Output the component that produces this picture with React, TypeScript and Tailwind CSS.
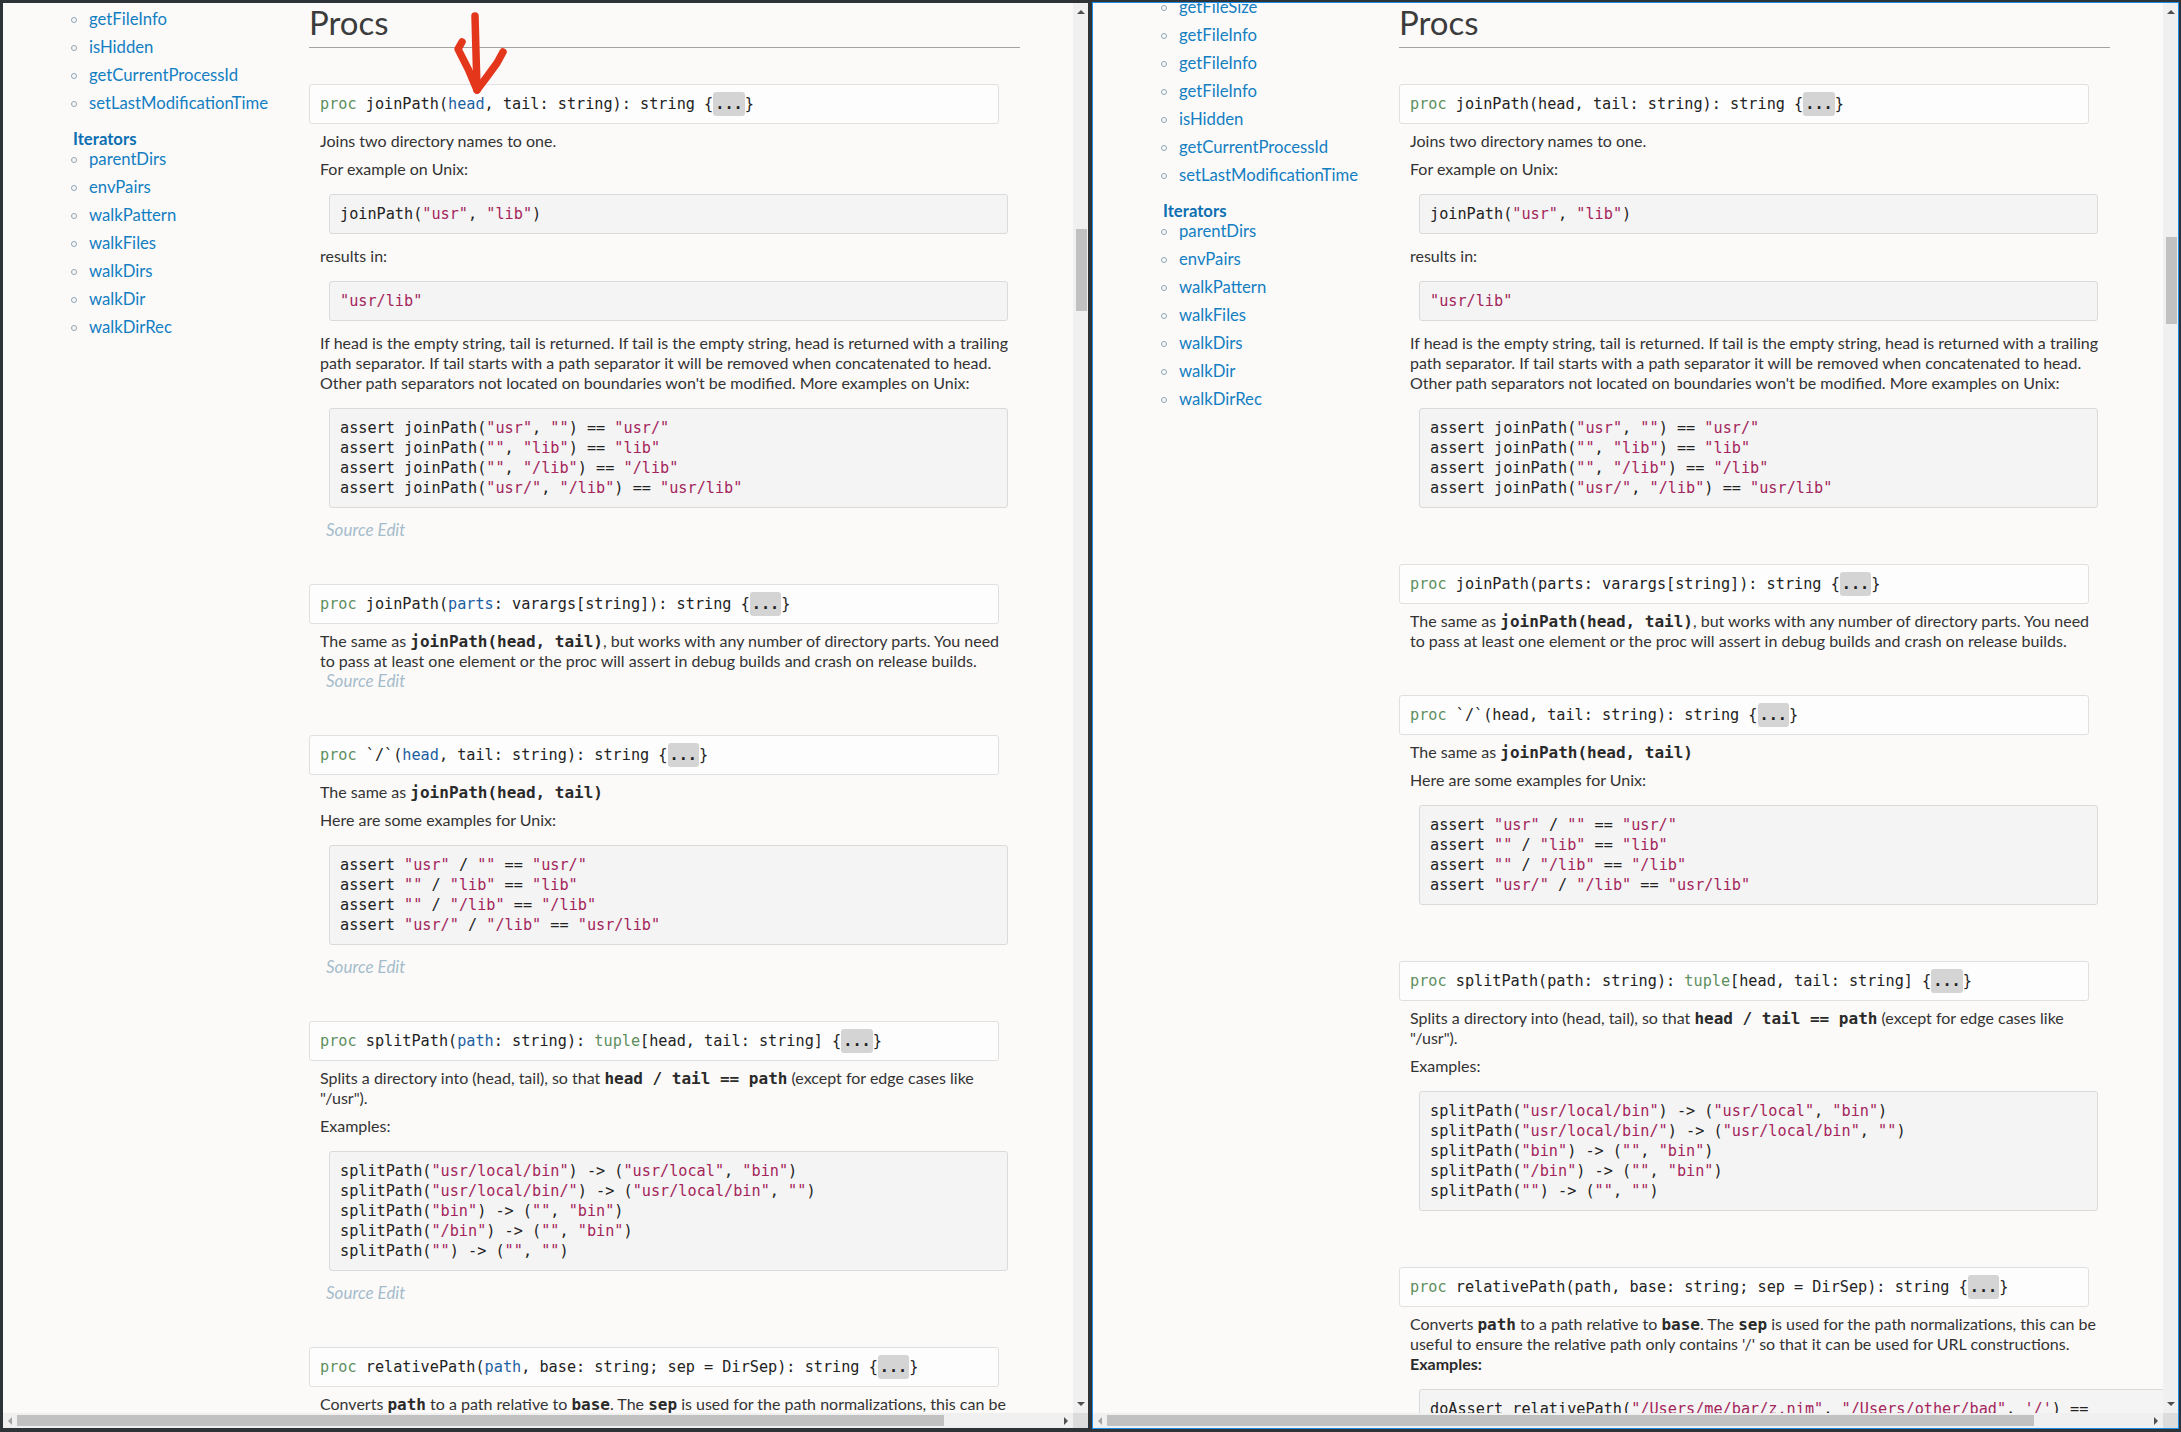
import React from 'react';

type Kids = { children?: React.ReactNode };

const MONO = "font-['DejaVu_Sans_Mono',monospace]";

// syntax colouring used by nimdoc
const Str = ({ children }: Kids) => <span className="text-[#a4255b]">{children}</span>;
const Kw = ({ children }: Kids) => <span className="text-[#5e8f60]">{children}</span>;
const Arg = ({ hl, children }: Kids & { hl: boolean }) => (
  <span className={hl ? 'text-[#1b5fa3]' : undefined}>{children}</span>
);
// inline code in prose; leading-none so it doesn't grow the line box
const B = ({ children }: Kids) => (
  <code className={`${MONO} font-bold text-[16px] leading-none text-[#2a2a2a]`}>{children}</code>
);

const Signature = ({ children }: Kids) => (
  <div
    className={`w-[690px] rounded-[3px] border border-[#e0e0e0] bg-[#fdfdfd] px-[10px] py-[9px] ${MONO} text-[15.2px] leading-[20px] text-[#222] whitespace-pre`}
  >
    <Kw>proc</Kw> {children} {'{'}
    <span className="rounded-[3px] bg-[#d4d4d4] px-[2px] py-[3px] font-bold">...</span>
    {'}'}
  </div>
);

const Code = ({ children, wide }: Kids & { wide?: boolean }) => (
  <pre
    className={`ml-[9px] ${wide ? 'w-[1100px]' : 'w-[679px]'} mt-[7px] mb-[12px] rounded-[3px] border border-[#dadada] bg-[#f4f4f4] px-[10px] py-[9px] ${MONO} text-[15.2px] leading-[20px] text-[#222] whitespace-pre`}
  >
    {children}
  </pre>
);

const P = ({ children }: Kids) => <p className="mb-[8px] last:mb-0">{children}</p>;

const SourceEdit = () => (
  <div className="ml-[17px] h-[20px] leading-[20px] italic text-[17px] text-[#a5bccb]">Source Edit</div>
);

const Entry = ({
  sig,
  first,
  source,
  children
}: Kids & { sig: React.ReactNode; first?: boolean; source: boolean }) => (
  <div className={`flex flex-col ${first ? 'mt-[36px]' : 'mt-[44px]'}`}>
    <Signature>{sig}</Signature>
    <div className="ml-[11px] mt-[7px] w-[698px] flex flex-col">{children}</div>
    {source && <SourceEdit />}
  </div>
);

const Procs = ({ hl, source }: { hl: boolean; source: boolean }) => (
  <div className="w-[711px] flex flex-col text-[16px] leading-[20px] text-[#333]">
    <h1 className="text-[33px] leading-[38px] pb-[6px] border-b border-[#a3a3a3] text-[#3c3c3c]">Procs</h1>

    {/* joinPath(head, tail) */}
    <Entry
      first
      source={source}
      sig={
        <>
          joinPath(<Arg hl={hl}>head</Arg>, tail: string): string
        </>
      }
    >
      <P>Joins two directory names to one.</P>
      <P>For example on Unix:</P>
      <Code>
        <div>
          joinPath(<Str>"usr"</Str>, <Str>"lib"</Str>)
        </div>
      </Code>
      <P>results in:</P>
      <Code>
        <div>
          <Str>"usr/lib"</Str>
        </div>
      </Code>
      <P>
        If head is the empty string, tail is returned. If tail is the empty string, head is returned with a trailing
        <br />
        path separator. If tail starts with a path separator it will be removed when concatenated to head.
        <br />
        Other path separators not located on boundaries won't be modified. More examples on Unix:
      </P>
      <Code>
        <div>
          assert joinPath(<Str>"usr"</Str>, <Str>""</Str>) == <Str>"usr/"</Str>
        </div>
        <div>
          assert joinPath(<Str>""</Str>, <Str>"lib"</Str>) == <Str>"lib"</Str>
        </div>
        <div>
          assert joinPath(<Str>""</Str>, <Str>"/lib"</Str>) == <Str>"/lib"</Str>
        </div>
        <div>
          assert joinPath(<Str>"usr/"</Str>, <Str>"/lib"</Str>) == <Str>"usr/lib"</Str>
        </div>
      </Code>
    </Entry>

    {/* joinPath(parts) */}
    <Entry
      source={source}
      sig={
        <>
          joinPath(<Arg hl={hl}>parts</Arg>: varargs[string]): string
        </>
      }
    >
      <P>
        The same as <B>joinPath(head, tail)</B>, but works with any number of directory parts. You need
        <br />
        to pass at least one element or the proc will assert in debug builds and crash on release builds.
      </P>
    </Entry>

    {/* `/` */}
    <Entry
      source={source}
      sig={
        <>
          `/`(<Arg hl={hl}>head</Arg>, tail: string): string
        </>
      }
    >
      <P>
        The same as <B>joinPath(head, tail)</B>
      </P>
      <P>Here are some examples for Unix:</P>
      <Code>
        <div>
          assert <Str>"usr"</Str> / <Str>""</Str> == <Str>"usr/"</Str>
        </div>
        <div>
          assert <Str>""</Str> / <Str>"lib"</Str> == <Str>"lib"</Str>
        </div>
        <div>
          assert <Str>""</Str> / <Str>"/lib"</Str> == <Str>"/lib"</Str>
        </div>
        <div>
          assert <Str>"usr/"</Str> / <Str>"/lib"</Str> == <Str>"usr/lib"</Str>
        </div>
      </Code>
    </Entry>

    {/* splitPath */}
    <Entry
      source={source}
      sig={
        <>
          splitPath(<Arg hl={hl}>path</Arg>: string): <Kw>tuple</Kw>[head, tail: string]
        </>
      }
    >
      <P>
        Splits a directory into (head, tail), so that <B>head / tail == path</B> (except for edge cases like
        <br />
        "/usr").
      </P>
      <P>Examples:</P>
      <Code>
        <div>
          splitPath(<Str>"usr/local/bin"</Str>) -&gt; (<Str>"usr/local"</Str>, <Str>"bin"</Str>)
        </div>
        <div>
          splitPath(<Str>"usr/local/bin/"</Str>) -&gt; (<Str>"usr/local/bin"</Str>, <Str>""</Str>)
        </div>
        <div>
          splitPath(<Str>"bin"</Str>) -&gt; (<Str>""</Str>, <Str>"bin"</Str>)
        </div>
        <div>
          splitPath(<Str>"/bin"</Str>) -&gt; (<Str>""</Str>, <Str>"bin"</Str>)
        </div>
        <div>
          splitPath(<Str>""</Str>) -&gt; (<Str>""</Str>, <Str>""</Str>)
        </div>
      </Code>
    </Entry>

    {/* relativePath */}
    <Entry
      source={source}
      sig={
        <>
          relativePath(<Arg hl={hl}>path</Arg>, base: string; sep = DirSep): string
        </>
      }
    >
      <P>
        Converts <B>path</B> to a path relative to <B>base</B>. The <B>sep</B> is used for the path normalizations,
        this can be
        <br />
        useful to ensure the relative path only contains '/' so that it can be used for URL constructions.
        <br />
        <strong className="font-bold text-[#2a2a2a]">Examples:</strong>
      </P>
      <Code wide>
        <div>
          doAssert relativePath(<Str>"/Users/me/bar/z.nim"</Str>, <Str>"/Users/other/bad"</Str>, <Str>'/'</Str>) ==
        </div>
      </Code>
    </Entry>
  </div>
);

type SideEntry = string | { header: string };

const Sidebar = ({ items, offset }: { items: SideEntry[]; offset: string }) => (
  <ul className={`w-[306px] shrink-0 ${offset} text-[16.7px]`}>
    {items.map((it, i) =>
      typeof it === 'string' ? (
        <li key={i} className="h-[28px] flex items-center">
          <span className="ml-[68px] w-[6px] h-[6px] rounded-full border border-[#8ea5b5]" />
          <span className="ml-[12px] text-[#137ec2]">{it}</span>
        </li>
      ) : (
        <li key={i} className="mt-[14px] h-[14px] leading-[14px] pl-[70px] font-bold text-[#0b6fb1]">
          {it.header}
        </li>
      )
    )}
  </ul>
);

const iterators = ['parentDirs', 'envPairs', 'walkPattern', 'walkFiles', 'walkDirs', 'walkDir', 'walkDirRec'];

const leftSide: SideEntry[] = [
  'getFileInfo',
  'isHidden',
  'getCurrentProcessId',
  'setLastModificationTime',
  { header: 'Iterators' },
  ...iterators
];

const rightSide: SideEntry[] = [
  'getFileSize',
  'getFileInfo',
  'getFileInfo',
  'getFileInfo',
  'isHidden',
  'getCurrentProcessId',
  'setLastModificationTime',
  { header: 'Iterators' },
  ...iterators
];

// browser scrollbars
const VScroll = ({ thumb }: { thumb: string }) => (
  <div className="w-[15px] h-[1410px] bg-[#f0f0f0] flex flex-col items-center">
    <div className="mt-[7px] w-0 h-0 border-x-[4px] border-x-transparent border-b-[4px] border-b-[#505050]" />
    <div className={`self-start ml-[3px] w-[11px] bg-[#c1c1c1] ${thumb}`} />
    <div className="flex-1" />
    <div className="mb-[7px] w-0 h-0 border-x-[4px] border-x-transparent border-t-[4px] border-t-[#505050]" />
  </div>
);

const HScroll = () => (
  <div className="flex h-[15px]">
    <div className="w-[1070px] bg-[#f0f0f0] flex items-center">
      <div className="ml-[5px] w-0 h-0 border-y-[4px] border-y-transparent border-r-[4px] border-r-[#a3a3a3]" />
      <div className="ml-[5px] w-[927px] h-[11px] bg-[#c1c1c1]" />
      <div className="flex-1" />
      <div className="mr-[5px] w-0 h-0 border-y-[4px] border-y-transparent border-l-[4px] border-l-[#505050]" />
    </div>
    <div className="w-[15px] bg-[#dcdcdc]" />
  </div>
);

// hand-drawn annotation over the first signature
const RedArrow = () => (
  <svg className="absolute left-0 top-0 pointer-events-none" width="600" height="120">
    <g fill="none" stroke="#e4361b" strokeWidth="7.5" strokeLinecap="round" strokeLinejoin="round">
      <path d="M472 13 L474 86" />
      <path d="M459 39 L455 46 Q466 66 474 87" />
      <path d="M500 49 L494 60 Q484 74 474 87" />
    </g>
  </svg>
);

const Pane = ({
  focused,
  side,
  sideOffset,
  hl,
  source,
  thumb,
  arrow
}: {
  focused: boolean;
  side: SideEntry[];
  sideOffset: string;
  hl: boolean;
  source: boolean;
  thumb: string;
  arrow?: boolean;
}) => (
  <div className={`flex flex-col border ${focused ? 'border-[#1c8ce6]' : 'border-[#2e3337]'}`}>
    <div className="flex">
      <div className="relative w-[1070px] h-[1410px] overflow-hidden bg-[#fbfaf9] font-['Lato',sans-serif]">
        <div className="flex items-start">
          <Sidebar items={side} offset={sideOffset} />
          <Procs hl={hl} source={source} />
        </div>
        {arrow && <RedArrow />}
      </div>
      <VScroll thumb={thumb} />
    </div>
    <HScroll />
  </div>
);

export default function App() {
  return (
    <div className="w-[2181px] h-[1432px] overflow-hidden bg-[#2e3337] flex items-start gap-[3px] pt-[2px] pl-[2px]">
      <Pane focused={false} side={leftSide} sideOffset="mt-[3px]" hl source thumb="mt-[215px] h-[82px]" arrow />
      <Pane focused side={rightSide} sideOffset="-mt-[9px]" hl={false} source={false} thumb="mt-[223px] h-[87px]" />
    </div>
  );
}
